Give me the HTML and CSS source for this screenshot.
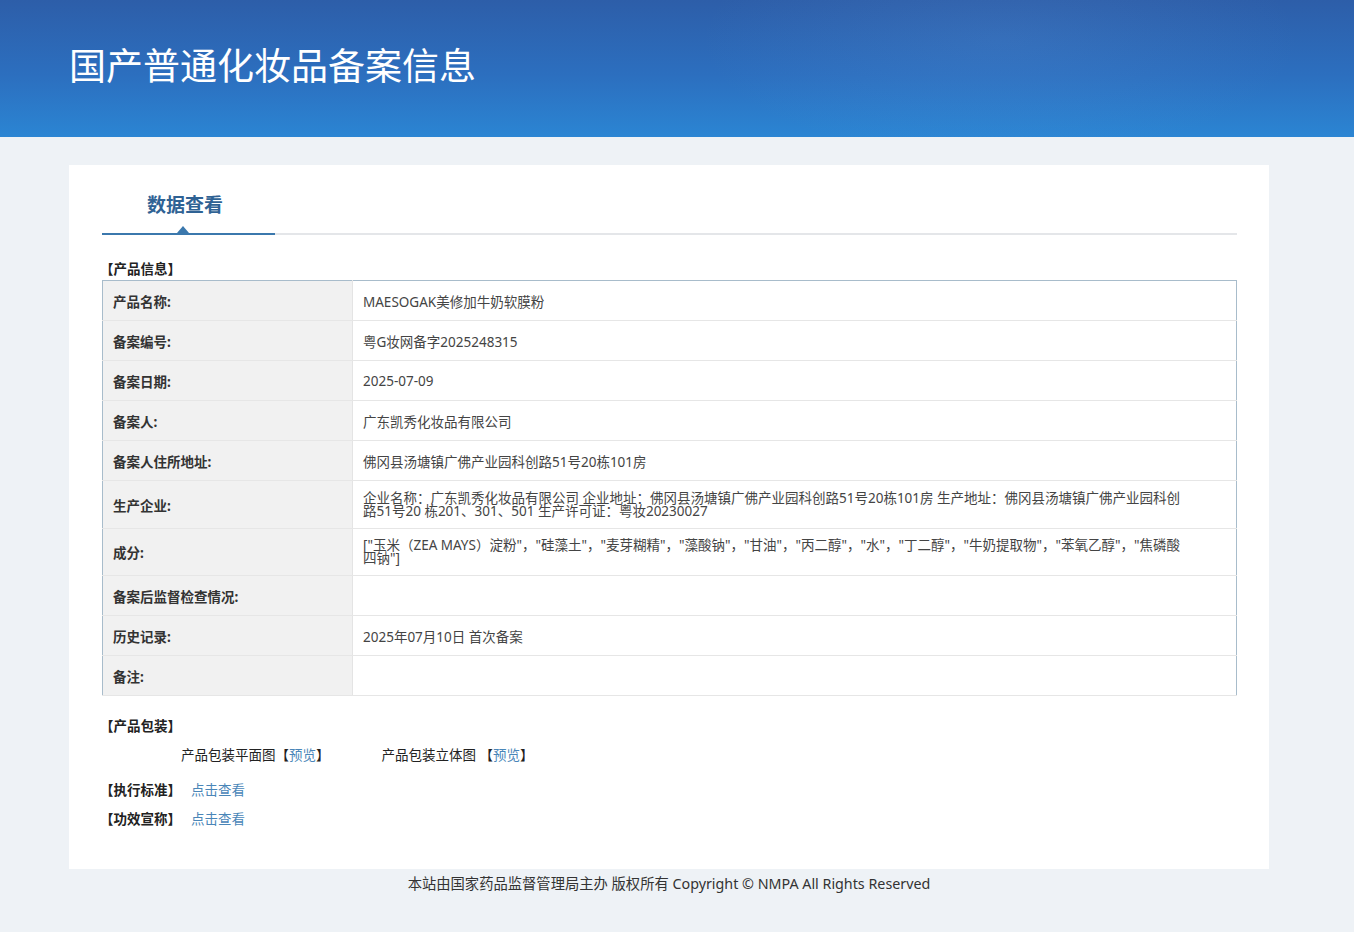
FILE: index.html
```html
<!DOCTYPE html>
<html lang="zh-CN">
<head>
  <meta charset="UTF-8" />
  <meta name="viewport" content="width=device-width, initial-scale=1.0" />
  <title>国产普通化妆品备案信息</title>
  <link rel="stylesheet" href="styles.css">
</head>
<body>
  <header class="banner">
    <div class="wrap">
      <h1>国产普通化妆品备案信息</h1>
    </div>
  </header>

  <div class="wrap">
    <main class="card">
      <div class="tabs">
        <div class="tab active">数据查看</div>
      </div>

      <h3 class="block-title">【产品信息】</h3>
      <table class="info">
        <tr><th>产品名称:</th><td>MAESOGAK美修加牛奶软膜粉</td></tr>
        <tr><th>备案编号:</th><td>粤G妆网备字2025248315</td></tr>
        <tr><th>备案日期:</th><td>2025-07-09</td></tr>
        <tr><th>备案人:</th><td>广东凯秀化妆品有限公司</td></tr>
        <tr><th>备案人住所地址:</th><td>佛冈县汤塘镇广佛产业园科创路51号20栋101房</td></tr>
        <tr class="tall"><th>生产企业:</th><td>企业名称：广东凯秀化妆品有限公司 企业地址：佛冈县汤塘镇广佛产业园科创路51号20栋101房 生产地址：佛冈县汤塘镇广佛产业园科创路51号20 栋201、301、501 生产许可证：粤妆20230027</td></tr>
        <tr class="tall"><th>成分:</th><td>["玉米（ZEA MAYS）淀粉"，"硅藻土"，"麦芽糊精"，"藻酸钠"，"甘油"，"丙二醇"，"水"，"丁二醇"，"牛奶提取物"，"苯氧乙醇"，"焦磷酸四钠"]</td></tr>
        <tr><th>备案后监督检查情况:</th><td></td></tr>
        <tr><th>历史记录:</th><td>2025年07月10日 首次备案</td></tr>
        <tr><th>备注:</th><td></td></tr>
      </table>

      <h3 class="block-title pack-title">【产品包装】</h3>
      <div class="pack">
        <span>产品包装平面图【<a href="#">预览</a>】</span>
        <span>产品包装立体图 【<a href="#">预览</a>】</span>
      </div>

      <p class="line"><b>【执行标准】</b><a href="#">点击查看</a></p>
      <p class="line"><b>【功效宣称】</b><a href="#">点击查看</a></p>
    </main>

    <footer>本站由国家药品监督管理局主办 版权所有 Copyright © NMPA All Rights Reserved</footer>
  </div>
</body>
</html>
```

FILE: styles.css
```css
body, html {
  margin: 0;
  padding: 0;
  font-family: "Noto Sans", "Noto Sans CJK SC", sans-serif;
  color: #333;
  background-color: #eef2f6;
}

.wrap {
  width: 1200px;
  margin-left: 69px;
}

.banner {
  height: 137px;
  background: radial-gradient(ellipse 300px 120px at 1000px 40px, rgba(120, 170, 230, 0.12), transparent),
              linear-gradient(to bottom, #2d5ea9 0%, #2c6fbf 55%, #2b85d3 100%);
  overflow: hidden;
}

.banner h1 {
  margin: 0;
  padding-top: 40px;
  font-family: "Noto Sans CJK SC", sans-serif;
  font-size: 37px;
  font-weight: normal;
  line-height: 48px;
  color: #fff;
}

.card {
  margin-top: 28px;
  background: #fff;
  padding: 16px 32px 30px 33px;
  min-height: 658px;
}

.tabs {
  display: flex;
  border-bottom: 2px solid #e4e6e9;
  height: 52px;
}

.tab {
  position: relative;
  width: 166px;
  padding-right: 7px;
  text-align: center;
  font-family: "Noto Sans CJK SC", sans-serif;
  font-size: 19px;
  font-weight: bold;
  color: #2f6294;
  line-height: 46px;
  border-bottom: 2px solid #3b78ad;
  margin-bottom: -2px;
}

.tab.active::after {
  content: "";
  position: absolute;
  left: 75px;
  bottom: 0;
  border-left: 6px solid transparent;
  border-right: 6px solid transparent;
  border-bottom: 7px solid #3b78ad;
}

.block-title {
  margin: 25px 0 2px -2px;
  font-size: 13.5px;
  font-weight: bold;
  color: #222;
  line-height: 18px;
}

.info {
  width: 100%;
  table-layout: fixed;
  border-collapse: collapse;
  border: 1px solid #a8bccb;
  font-size: 13.5px;
}

.info th {
  width: 229px;
  background: #f1f1f1;
  text-align: left;
  font-weight: bold;
  color: #333;
  padding: 0 10px;
  border-right: 1px solid #e4e4e4;
}

.info th, .info td {
  height: 39px;
  border-bottom: 1px solid #e6e6e6;
}

.info td {
  padding: 0 10px;
  color: #444;
  background: #fff;
}

/* two-line rows: maker address and ingredient list */
.info tr.tall th, .info tr.tall td {
  height: 47px;
}

.info tr.tall + tr.tall th, .info tr.tall + tr.tall td {
  height: 46px;
}

.info tr.tall td {
  line-height: 13px;
  padding-right: 52px;
}

.pack-title {
  margin-top: 21px;
}

.pack {
  display: flex;
  gap: 52px;
  padding-left: 79px;
  font-size: 13.5px;
  color: #222;
  line-height: 20px;
  margin-top: 10px;
}

a {
  color: #4a86b8;
  text-decoration: none;
}

.line {
  margin: 18px 0 0 -2px;
  font-size: 13.5px;
  line-height: 14px;
}

.line + .line {
  margin-top: 15px;
}

.line b {
  color: #222;
  margin-right: 10px;
}

footer {
  text-align: center;
  font-size: 14.3px;
  color: #333;
  padding: 6px 0 20px;
  line-height: 18px;
}
```
